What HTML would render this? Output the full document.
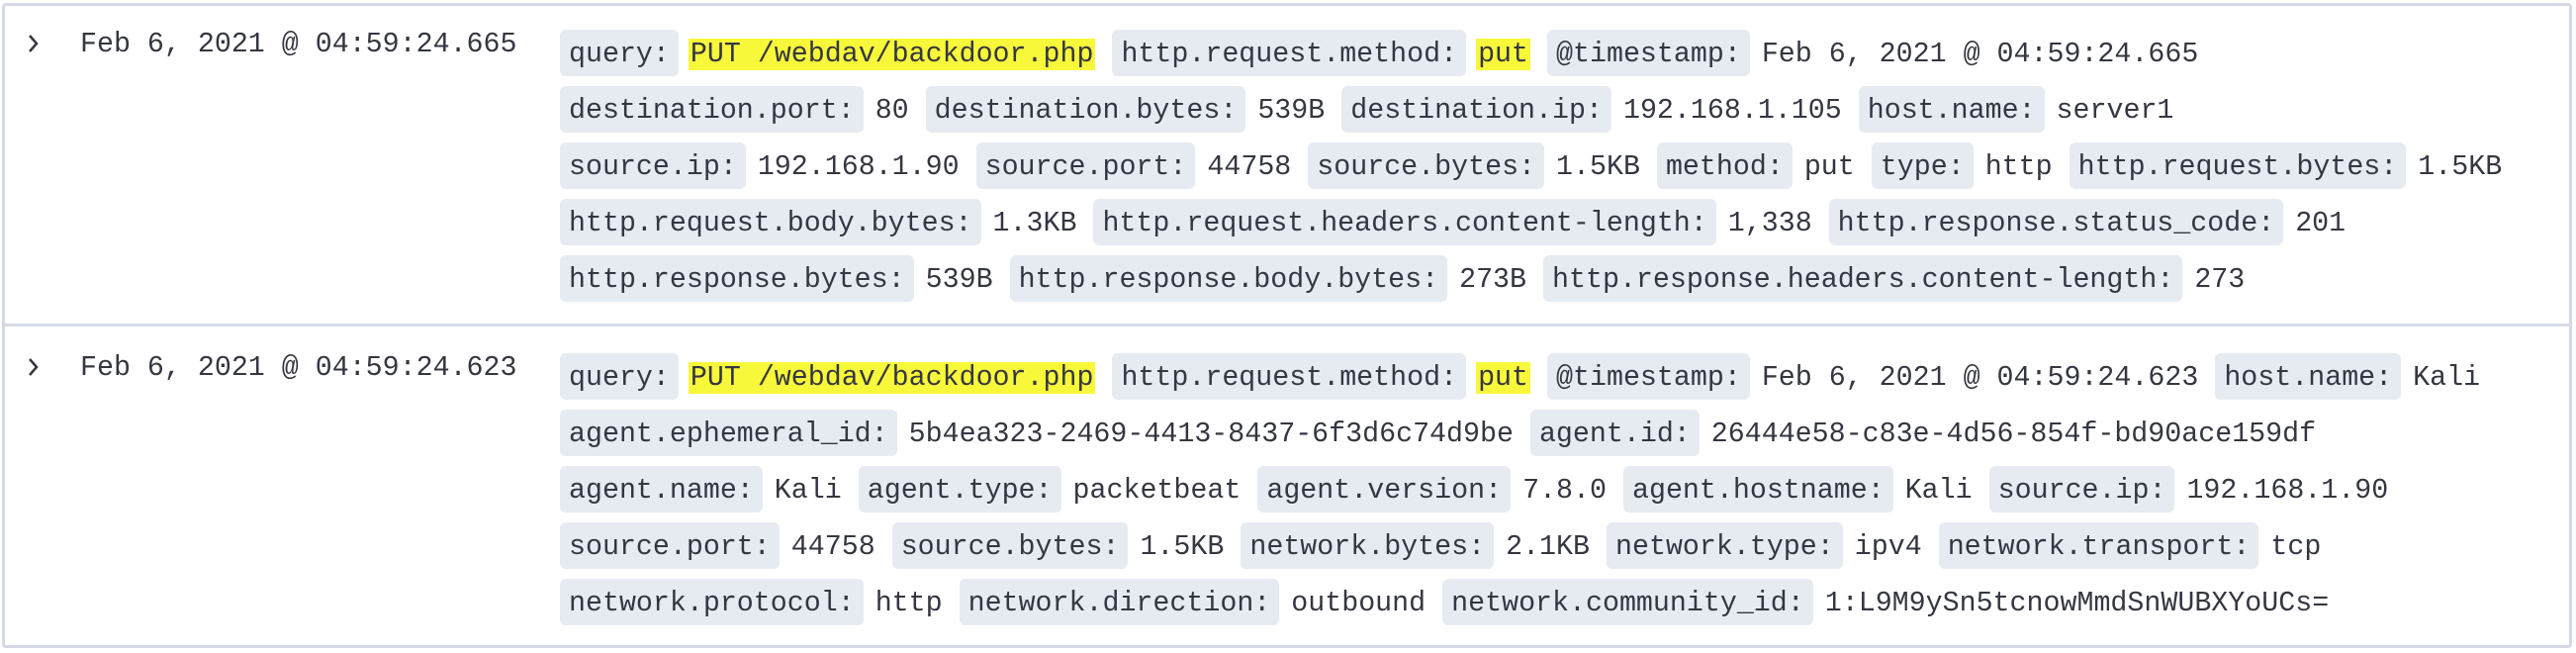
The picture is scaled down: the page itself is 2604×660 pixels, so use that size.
<!DOCTYPE html>
<html><head><meta charset="utf-8"><style>
*{margin:0;padding:0;box-sizing:border-box}
body{width:2604px;height:660px;background:#fff;position:relative;overflow:hidden;font-family:"Liberation Mono",monospace;font-size:28.3px;color:#343741}
.box{position:absolute;left:2px;top:3px;width:2598px;height:652px;border:3px solid #d3dae6;border-radius:4px}
.sep{position:absolute;left:2px;top:327px;width:2598px;height:3px;background:#d3dae6}
.date{position:absolute;left:81px;white-space:pre;line-height:30px}
.chev{position:absolute;left:24px;width:20px;height:30px}
.lines{position:absolute;left:566px}
.l{height:57px;display:flex;align-items:flex-start;white-space:pre}
.p{background:#e6ebf2;height:47px;line-height:50px;padding:0 9px;border-radius:6px;margin-right:12px}
.v{line-height:50px;margin-right:17px}
.h{background:#f8f83a;padding:0 2px;margin-left:-2px}
</style></head><body>
<div class="box"></div>
<div class="sep"></div>

<svg class="chev" style="top:30px" viewBox="0 0 20 30"><path d="M6 6 L13 14 L6 22" fill="none" stroke="#343741" stroke-width="2.5"/></svg>
<div class="date" style="top:30px">Feb 6, 2021 @ 04:59:24.665</div>
<div class="lines" style="top:30px">
<div class="l"><span class="p">query:</span><span class="v"><span class="h">PUT /webdav/backdoor.php</span></span><span class="p">http.request.method:</span><span class="v"><span class="h">put</span></span><span class="p">@timestamp:</span><span class="v">Feb 6, 2021 @ 04:59:24.665</span></div>
<div class="l"><span class="p">destination.port:</span><span class="v">80</span><span class="p">destination.bytes:</span><span class="v">539B</span><span class="p">destination.ip:</span><span class="v">192.168.1.105</span><span class="p">host.name:</span><span class="v">server1</span></div>
<div class="l"><span class="p">source.ip:</span><span class="v">192.168.1.90</span><span class="p">source.port:</span><span class="v">44758</span><span class="p">source.bytes:</span><span class="v">1.5KB</span><span class="p">method:</span><span class="v">put</span><span class="p">type:</span><span class="v">http</span><span class="p">http.request.bytes:</span><span class="v">1.5KB</span></div>
<div class="l"><span class="p">http.request.body.bytes:</span><span class="v">1.3KB</span><span class="p">http.request.headers.content-length:</span><span class="v">1,338</span><span class="p">http.response.status_code:</span><span class="v">201</span></div>
<div class="l"><span class="p">http.response.bytes:</span><span class="v">539B</span><span class="p">http.response.body.bytes:</span><span class="v">273B</span><span class="p">http.response.headers.content-length:</span><span class="v">273</span></div>
</div>

<svg class="chev" style="top:357px" viewBox="0 0 20 30"><path d="M6 6 L13 14 L6 22" fill="none" stroke="#343741" stroke-width="2.5"/></svg>
<div class="date" style="top:357px">Feb 6, 2021 @ 04:59:24.623</div>
<div class="lines" style="top:357px">
<div class="l"><span class="p">query:</span><span class="v"><span class="h">PUT /webdav/backdoor.php</span></span><span class="p">http.request.method:</span><span class="v"><span class="h">put</span></span><span class="p">@timestamp:</span><span class="v">Feb 6, 2021 @ 04:59:24.623</span><span class="p">host.name:</span><span class="v">Kali</span></div>
<div class="l"><span class="p">agent.ephemeral_id:</span><span class="v">5b4ea323-2469-4413-8437-6f3d6c74d9be</span><span class="p">agent.id:</span><span class="v">26444e58-c83e-4d56-854f-bd90ace159df</span></div>
<div class="l"><span class="p">agent.name:</span><span class="v">Kali</span><span class="p">agent.type:</span><span class="v">packetbeat</span><span class="p">agent.version:</span><span class="v">7.8.0</span><span class="p">agent.hostname:</span><span class="v">Kali</span><span class="p">source.ip:</span><span class="v">192.168.1.90</span></div>
<div class="l"><span class="p">source.port:</span><span class="v">44758</span><span class="p">source.bytes:</span><span class="v">1.5KB</span><span class="p">network.bytes:</span><span class="v">2.1KB</span><span class="p">network.type:</span><span class="v">ipv4</span><span class="p">network.transport:</span><span class="v">tcp</span></div>
<div class="l"><span class="p">network.protocol:</span><span class="v">http</span><span class="p">network.direction:</span><span class="v">outbound</span><span class="p">network.community_id:</span><span class="v">1:L9M9ySn5tcnowMmdSnWUBXYoUCs=</span></div>
</div>
</body></html>
